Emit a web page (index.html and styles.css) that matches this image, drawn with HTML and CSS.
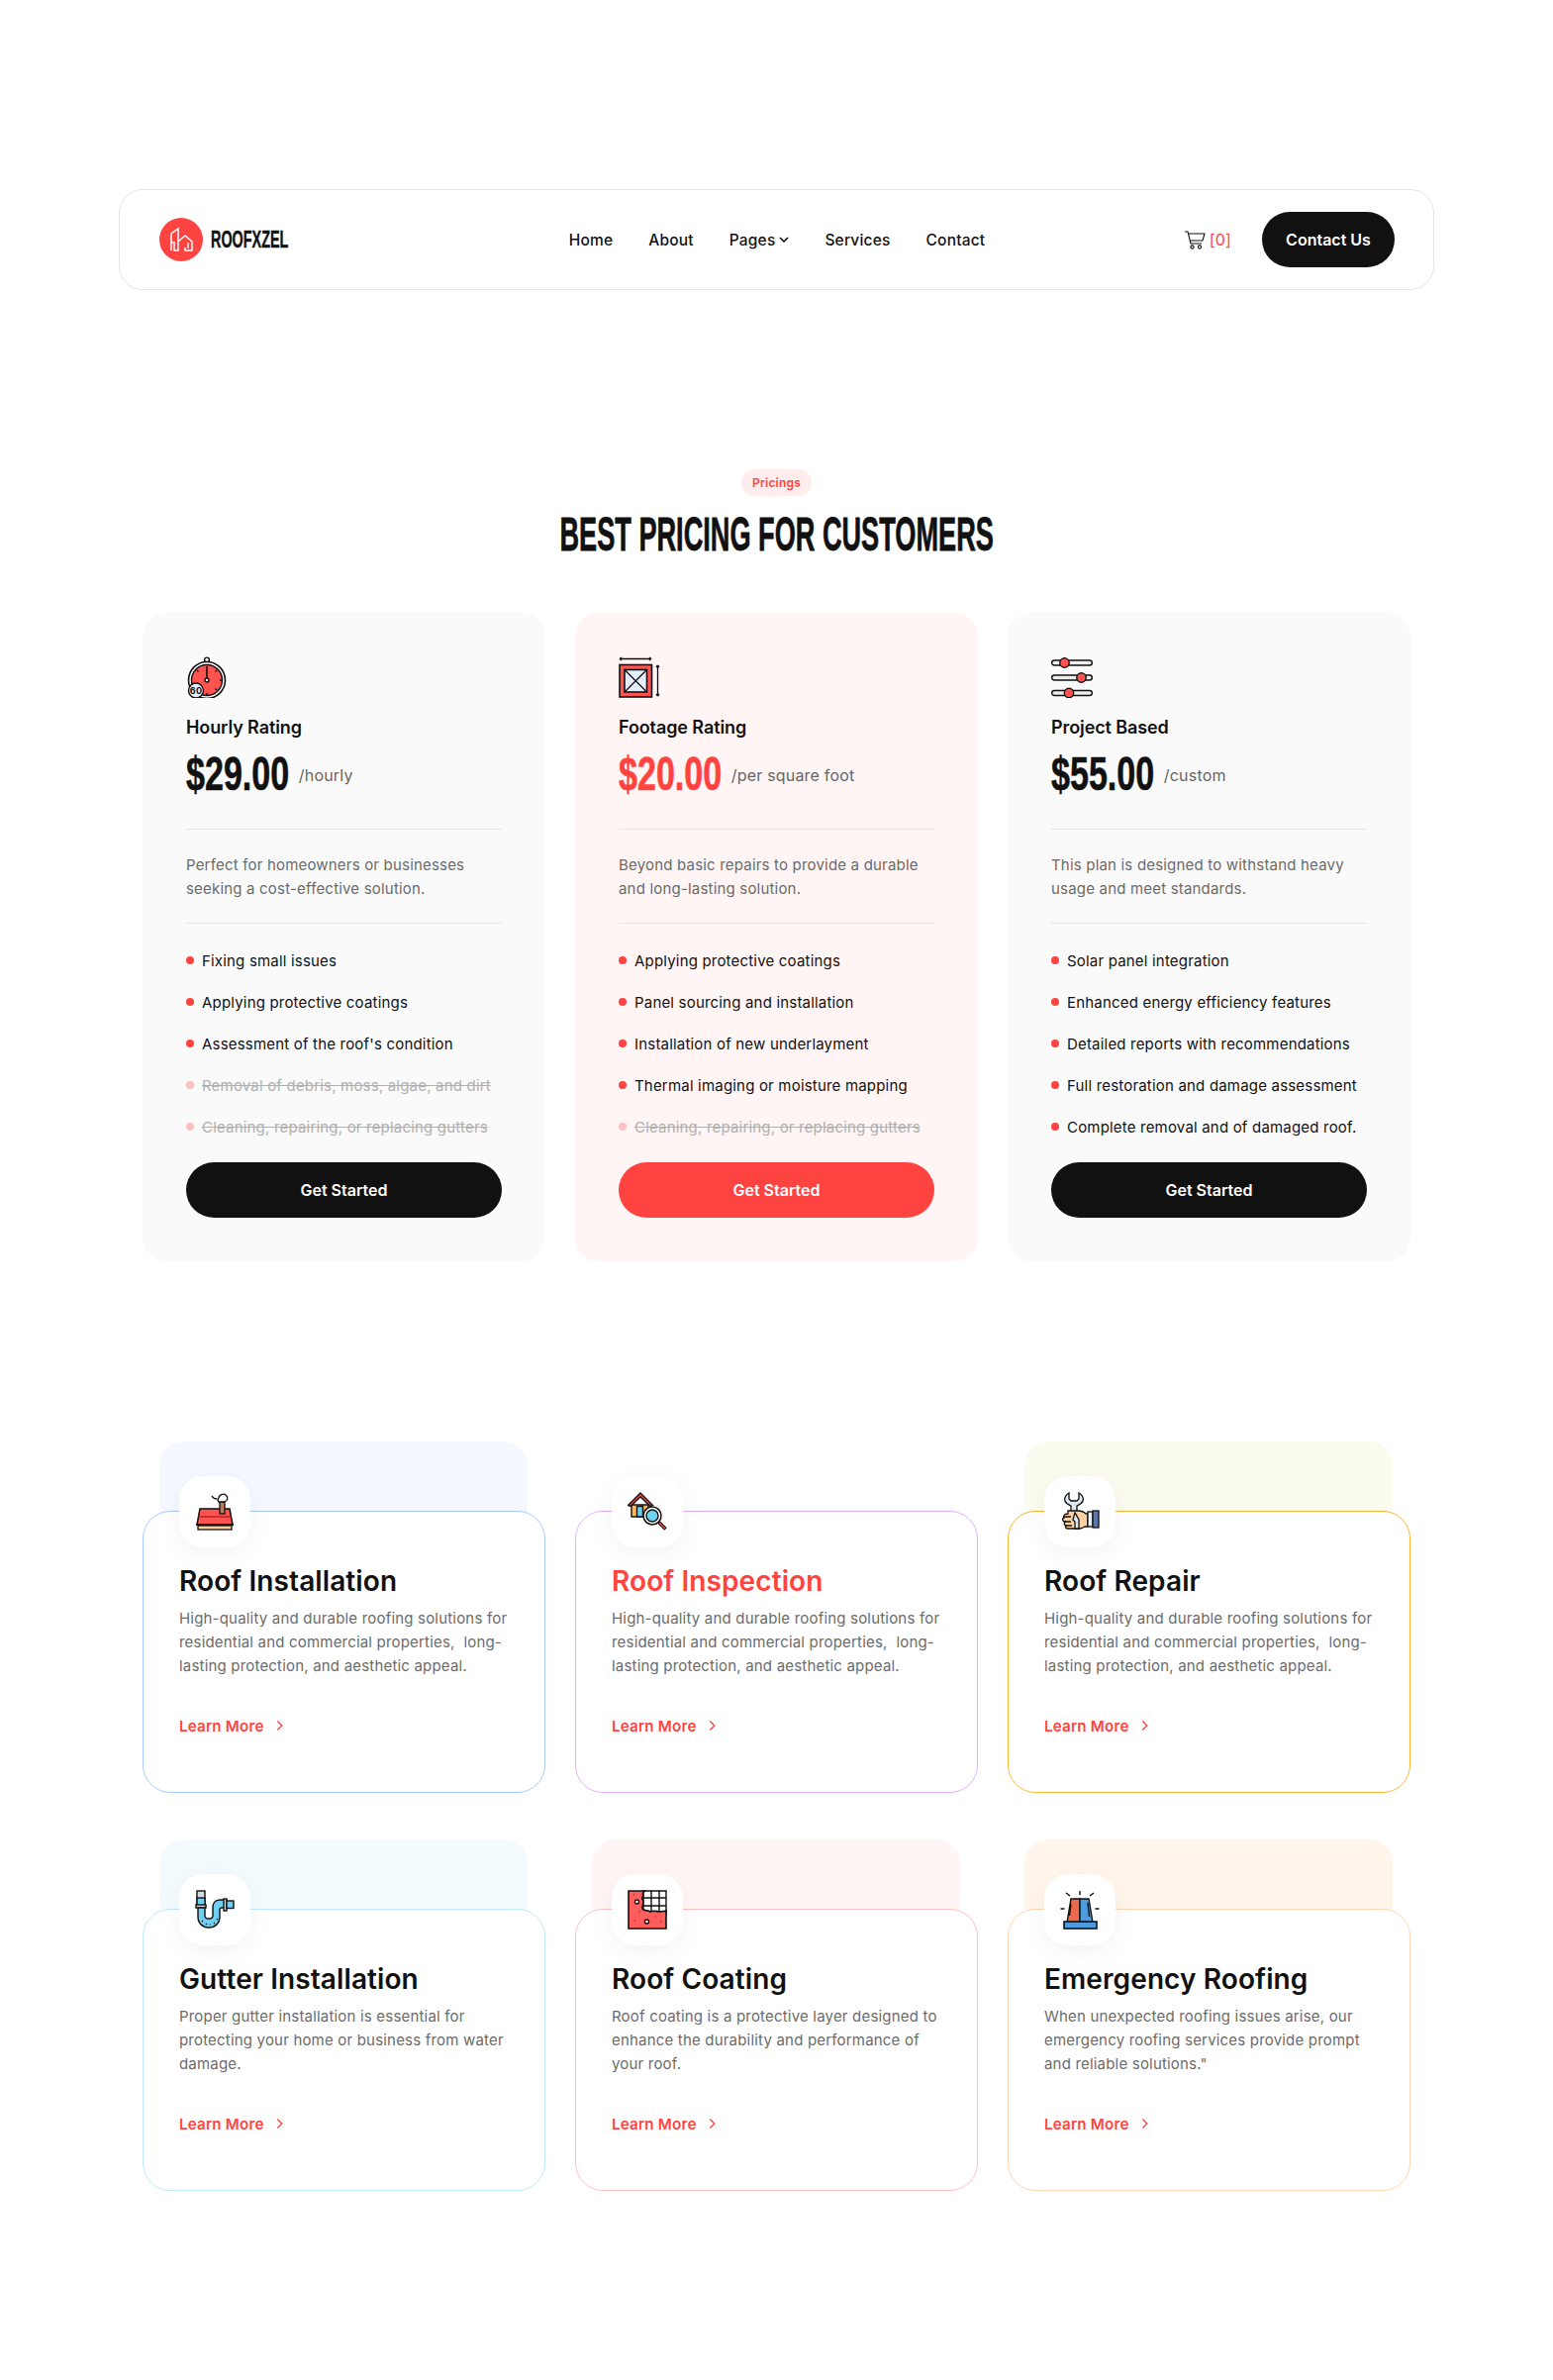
FILE: index.html
```html
<!DOCTYPE html>
<html lang="en">
<head>
<meta charset="utf-8">
<title>Roofxzel</title>
<link rel="stylesheet" href="styles.css">
</head>
<body>
<header class="site-header">
  <a class="brand">
    <span class="brand-mark">
      <svg viewBox="0 0 44 44" width="44" height="44" fill="none" stroke="#fff" stroke-width="1.5"><path d="M12 33V16l7-5v22h-4V25h-3"/><path d="M19 24l7-6 7 6v9h-7v-3"/><path d="M29 25v6"/></svg>
    </span>
    <span class="brand-name">ROOFXZEL</span>
  </a>
  <nav class="nav">
    <a>Home</a>
    <a>About</a>
    <a class="nav-drop">Pages <svg viewBox="0 0 10 6" width="10" height="6" fill="none" stroke="#111" stroke-width="1.600"><path d="M1 1l4 4 4-4"/></svg></a>
    <a>Services</a>
    <a>Contact</a>
  </nav>
  <div class="header-actions">
    <span class="cart">
      <svg viewBox="0 0 21 19" width="21" height="19" fill="none" stroke="#111" stroke-width="1.1"><path d="M0 1h3l3 12h11"/><path d="M3.4 3H20l-2 7H5.4"/><circle cx="7.5" cy="16.5" r="1.6"/><circle cx="15" cy="16.5" r="1.6"/></svg>
      <span class="cart-count">[0]</span>
    </span>
    <a class="contact-btn">Contact Us</a>
  </div>
</header>

<section class="pricing">
  <div class="section-head">
    <span class="pill">Pricings</span>
    <h2 class="section-title">BEST PRICING FOR CUSTOMERS</h2>
  </div>
  <div class="price-grid">
    <article class="price-card">
      <svg class="price-icon" viewBox="0 0 42 42" width="42" height="42" fill="none" stroke="#111" stroke-width="1.4"><circle cx="21" cy="3.500" r="2.400" fill="#fff"/><circle cx="21" cy="24" r="18.500" fill="#fafafa" stroke-width="1.600"/><circle cx="21" cy="24" r="15.500" fill="#ff5350"/><path d="M21 10v12" stroke-width="1.600"/><circle cx="21" cy="24" r="2" fill="#fff"/><path d="M31 14l-1.500 1.500M36 24h-2M31 34l-1.500-1.500M21 39v-2M11 14l1.500 1.500"/><circle cx="10" cy="34.500" r="7.500" fill="#e8eef8"/><text x="10" y="38" class="icon-text">60</text></svg>
      <h3 class="price-name">Hourly Rating</h3>
      <div class="price-row"><span class="price">$29.00</span><span class="per">/hourly</span></div>
      <p class="price-desc">Perfect for homeowners or businesses seeking a cost-effective solution.</p>
      <ul class="features">
        <li>Fixing small issues</li>
        <li>Applying protective coatings</li>
        <li>Assessment of the roof's condition</li>
        <li class="off">Removal of debris, moss, algae, and dirt</li>
        <li class="off">Cleaning, repairing, or replacing gutters</li>
      </ul>
      <a class="cta">Get Started</a>
    </article>
    <article class="price-card featured">
      <svg class="price-icon" viewBox="0 0 42 42" width="42" height="42" fill="none" stroke="#111" stroke-width="1.3"><rect x="1" y="8.500" width="32.500" height="32.500" fill="#ff5350" stroke-width="1.600"/><rect x="6" y="13.500" width="22.500" height="22.500" fill="#e5eefc" stroke-width="1.600"/><path d="M6 13.500l22.500 22.500M28.500 13.500L6 36"/><path d="M1 2.500h32M1 2.500l2-1.500M1 2.500l2 1.500M33 2.500l-2-1.500M33 2.500l-2 1.500M39.500 9v31M39.500 9l-1.500 2M39.500 9l1.500 2M39.500 40l-1.500-2M39.500 40l1.500-2"/></svg>
      <h3 class="price-name">Footage Rating</h3>
      <div class="price-row"><span class="price red">$20.00</span><span class="per">/per square foot</span></div>
      <p class="price-desc">Beyond basic repairs to provide a durable and long-lasting solution.</p>
      <ul class="features">
        <li>Applying protective coatings</li>
        <li>Panel sourcing and installation</li>
        <li>Installation of new underlayment</li>
        <li>Thermal imaging or moisture mapping</li>
        <li class="off">Cleaning, repairing, or replacing gutters</li>
      </ul>
      <a class="cta cta-red">Get Started</a>
    </article>
    <article class="price-card">
      <svg class="price-icon" viewBox="0 0 42 42" width="42" height="42" fill="none" stroke="#111" stroke-width="1.4"><rect x="0.700" y="4" width="40.600" height="5" rx="2.500" fill="#eee"/><rect x="0.700" y="19" width="40.600" height="5" rx="2.500" fill="#eee"/><rect x="0.700" y="34.500" width="40.600" height="5" rx="2.500" fill="#eee"/><circle cx="13.500" cy="6.500" r="4.700" fill="#ff5350"/><circle cx="30.500" cy="21.500" r="4.700" fill="#ff5350"/><circle cx="18" cy="37" r="4.700" fill="#ff5350"/></svg>
      <h3 class="price-name">Project Based</h3>
      <div class="price-row"><span class="price">$55.00</span><span class="per">/custom</span></div>
      <p class="price-desc">This plan is designed to withstand heavy usage and meet standards.</p>
      <ul class="features">
        <li>Solar panel integration</li>
        <li>Enhanced energy efficiency features</li>
        <li>Detailed reports with recommendations</li>
        <li>Full restoration and damage assessment</li>
        <li>Complete removal and of damaged roof.</li>
      </ul>
      <a class="cta">Get Started</a>
    </article>
  </div>
</section>

<section class="services">
  <article class="service s-blue">
    <div class="service-card">
      <span class="service-icon"><svg viewBox="0 0 40 40" width="40" height="40" fill="none" stroke="#111" stroke-width="1.300"><path d="M5 17h30l3 16H2z" fill="#ff5350" stroke-width="1.500"/><path d="M3.500 25h33" stroke="#b8202a"/><path d="M1 33h38" stroke-width="1.800"/><rect x="3" y="34" width="34" height="4" fill="#ffcf9e"/><rect x="25" y="10" width="5" height="12" fill="#c47a55"/><path d="M24 10c-2-2-1-3 0-4 0-3 5-5 7-3 3 2 2 6-1 7zM22 7c-2 0-4-1-5-3" fill="#fff"/></svg></span>
      <h3 class="service-title">Roof Installation</h3>
      <p class="service-desc">High-quality and durable roofing solutions for residential and commercial properties,&nbsp; long-lasting protection, and aesthetic appeal.</p>
      <a class="learn">Learn More <svg viewBox="0 0 9 13" width="8" height="12" fill="none" stroke="#ff4340" stroke-width="1.500"><path d="M1.500 1.500l5 5-5 5"/></svg></a>
    </div>
  </article>
  <article class="service s-purple">
    <div class="service-card">
      <span class="service-icon"><svg viewBox="0 0 40 40" width="40" height="40" fill="none" stroke="#111" stroke-width="1.400"><path d="M4 13v12h17V13z" fill="#ffb94d"/><path d="M0.500 13.500L13 1l12.500 12.500-2.500 1L13 5 3 14.500z" fill="#f04848"/><rect x="9.500" y="14.500" width="6" height="10.500" fill="#6ec9ee"/><circle cx="25" cy="24" r="9" fill="#fff" stroke-width="1.500"/><circle cx="25" cy="24" r="6" fill="#6fd0f2"/><path d="M31.500 30.500l7 7" stroke-width="3.600"/><path d="M32 31l6 6" stroke="#f04848" stroke-width="1.500"/></svg></span>
      <h3 class="service-title title-red">Roof Inspection</h3>
      <p class="service-desc">High-quality and durable roofing solutions for residential and commercial properties,&nbsp; long-lasting protection, and aesthetic appeal.</p>
      <a class="learn">Learn More <svg viewBox="0 0 9 13" width="8" height="12" fill="none" stroke="#ff4340" stroke-width="1.500"><path d="M1.500 1.500l5 5-5 5"/></svg></a>
    </div>
  </article>
  <article class="service s-amber">
    <div class="service-card">
      <span class="service-icon"><svg viewBox="0 0 40 40" width="40" height="40" fill="none" stroke="#111" stroke-width="1.300"><path d="M9 1c-3 2-5 5-4 8 1 3 4 4 6 5v6h6v-6c2-1 5-2 6-5 1-3-1-6-4-8v6l-2 2h-6l-2-2z" fill="#dfe9f2"/><path d="M8 19h10c4 0 6 1 8 3h2v13h-3c-2 1-3 2-5 2H8c-2 0-3-1-2-3-2 0-2-3-1-4-3 0-3-4-1-4-1-3 1-4 4-4z" fill="#fcd0a0"/><path d="M3 25h8M4 30h7M6 34h6"/><path d="M15 21l-2 7 2 2v7h4v-9z" fill="#dfe9f2"/><rect x="28" y="20" width="5" height="15" fill="#eef2f6"/><rect x="33" y="19" width="6" height="17" fill="#5a76ad"/></svg></span>
      <h3 class="service-title">Roof Repair</h3>
      <p class="service-desc">High-quality and durable roofing solutions for residential and commercial properties,&nbsp; long-lasting protection, and aesthetic appeal.</p>
      <a class="learn">Learn More <svg viewBox="0 0 9 13" width="8" height="12" fill="none" stroke="#ff4340" stroke-width="1.500"><path d="M1.500 1.500l5 5-5 5"/></svg></a>
    </div>
  </article>
  <article class="service s-cyan">
    <div class="service-card">
      <span class="service-icon"><svg viewBox="0 0 40 40" width="40" height="40" fill="none" stroke="#111" stroke-width="1.400"><rect x="2" y="1" width="8" height="15" fill="#d6dce2"/><rect x="2" y="8" width="8" height="8" fill="#6fd0f2"/><rect x="1" y="15" width="10" height="3" fill="#d6dce2"/><path d="M3 18v9c0 7 5 11 11 11s11-4 11-11v-7c0-1 1-2 2-2h5v-8h-7c-5 0-7 4-7 8v8c0 2-2 3-4 3s-4-1-4-3v-8z" fill="#6fd0f2"/><rect x="29" y="9" width="3" height="12" fill="#d6dce2"/><rect x="32" y="11" width="7" height="7.500" fill="#6fd0f2"/><path d="M7 31l1 1M11 34l1 1M15 35l1 0M19 34l1-1M22 30l1-1" stroke-width="1.200"/></svg></span>
      <h3 class="service-title">Gutter Installation</h3>
      <p class="service-desc">Proper gutter installation is essential for protecting your home or business from water damage.</p>
      <a class="learn">Learn More <svg viewBox="0 0 9 13" width="8" height="12" fill="none" stroke="#ff4340" stroke-width="1.500"><path d="M1.500 1.500l5 5-5 5"/></svg></a>
    </div>
  </article>
  <article class="service s-pink">
    <div class="service-card">
      <span class="service-icon"><svg viewBox="0 0 40 40" width="40" height="40" fill="none" stroke="#111" stroke-width="1.400"><path d="M16 1h23v23H16zM24 1v23M32 1v23M16 8h23M16 16h23"/><path d="M1 1h16c-2 3-2 3-1 5-2 2-1 4 0 5 0 3-1 5-1 8 2 3 6 1 8 3 4-2 7 0 9 0 3-1 5 0 7-1v18H1z" fill="#ff5c5c" stroke-width="1.600"/><circle cx="9.500" cy="12" r="2" fill="#fff"/><circle cx="19.500" cy="32" r="2" fill="#fff"/><path d="M6 5h.5M12 22h.5M7 31h.5M28 27h.5M33 32h.5" stroke-width="1.500"/></svg></span>
      <h3 class="service-title">Roof Coating</h3>
      <p class="service-desc">Roof coating is a protective layer designed to enhance the durability and performance of your roof.</p>
      <a class="learn">Learn More <svg viewBox="0 0 9 13" width="8" height="12" fill="none" stroke="#ff4340" stroke-width="1.500"><path d="M1.500 1.500l5 5-5 5"/></svg></a>
    </div>
  </article>
  <article class="service s-peach">
    <div class="service-card">
      <span class="service-icon"><svg viewBox="0 0 40 40" width="40" height="40" fill="none" stroke="#111" stroke-width="1.400"><path d="M11 9h9v24H7z" fill="#ec6a50"/><path d="M20 9h9l4 24H20z" fill="#4d9adf"/><rect x="4" y="32" width="33" height="7" fill="#4d9adf" stroke-width="1.600"/><path d="M20 1v4M6 3l4 3M34 3l-4 3M0.500 19h4M35.500 19h4M11 14l-1.500 12M28 13l1.500 14"/></svg></span>
      <h3 class="service-title">Emergency Roofing</h3>
      <p class="service-desc">When unexpected roofing issues arise, our emergency roofing services provide prompt and reliable solutions."</p>
      <a class="learn">Learn More <svg viewBox="0 0 9 13" width="8" height="12" fill="none" stroke="#ff4340" stroke-width="1.500"><path d="M1.500 1.500l5 5-5 5"/></svg></a>
    </div>
  </article>
</section>
</body>
</html>
```

FILE: styles.css
```css
* { box-sizing: border-box; }
html, body { margin: 0; padding: 0; }
body {
  background: #fff;
  color: #111;
  font-family: Inter, "Noto Sans", sans-serif;
  font-size: 15px;
  letter-spacing: 0.19px;
  min-height: 2404px;
}
h2, h3, p, ul { margin: 0; padding: 0; }
svg { display: block; }

.site-header {
  margin: 191px 120px 0;
  height: 102px;
  border: 1.5px solid #e6e6e6;
  border-radius: 24px;
  padding: 0 39px 0 40px;
  display: grid;
  grid-template-columns: 1fr auto 1fr;
  align-items: center;
}
.brand { display: flex; align-items: center; gap: 8px; }
.brand-mark { width: 44px; height: 44px; border-radius: 50%; background: #ff4340; }
.brand-name {
  display: inline-block;
  font-family: "Liberation Sans", sans-serif;
  font-weight: 700;
  font-size: 24px;
  letter-spacing: 0;
  color: #111;
  transform: scaleX(0.6);
  transform-origin: left center;
  -webkit-text-stroke: 0.4px #111;
}
.nav { display: flex; gap: 36px; font-size: 15.5px; font-weight: 450; }
.nav-drop { display: flex; align-items: center; gap: 4px; }
.header-actions { display: flex; justify-content: flex-end; align-items: center; gap: 31px; }
.cart { display: flex; align-items: center; gap: 4px; }
.cart-count { color: #ff4340; font-size: 16px; }
.contact-btn {
  height: 56px;
  width: 134px;
  border-radius: 28px;
  background: #111;
  color: #fff;
  font-weight: 600;
  font-size: 16px;
  letter-spacing: 0;
  display: flex;
  align-items: center;
  justify-content: center;
}

.pricing { margin-top: 181px; }
.section-head { display: flex; flex-direction: column; align-items: center; }
.pill {
  height: 27px;
  padding: 0 11px;
  border-radius: 14px;
  background: #ffeded;
  color: #ff4340;
  font-size: 12px;
  font-weight: 600;
  display: flex;
  align-items: center;
}
.section-title {
  margin-top: 13px;
  font-family: "Liberation Sans", sans-serif;
  font-weight: 700;
  font-size: 49px;
  line-height: 50px;
  letter-spacing: 0;
  color: #111;
  transform: scaleX(0.554);
  white-space: nowrap;
  -webkit-text-stroke: 0.8px #111;
}
.price-grid {
  margin: 55px 144px 0;
  display: grid;
  grid-template-columns: repeat(3, 1fr);
  gap: 30px;
}
.price-card {
  background: #fafafa;
  border-radius: 24px;
  padding: 44px;
  display: flex;
  flex-direction: column;
}
.price-card.featured { background: #fff5f4; }
.price-icon { display: block; }
.icon-text { font: 700 9px Inter, sans-serif; fill: #111; stroke: none; text-anchor: middle; }
.price-name { margin-top: 18px; font-size: 18px; line-height: 24px; font-weight: 600; letter-spacing: -0.1px; }
.price-row { margin-top: 8px; display: flex; align-items: center; gap: 10px; height: 50px; padding-bottom: 32px; box-sizing: content-box; border-bottom: 1.5px solid #e6e6e6; }
.price {
  display: inline-block;
  font-family: "Liberation Sans", sans-serif;
  font-weight: 700;
  font-size: 48px;
  line-height: 50px;
  letter-spacing: 0;
  margin-top: 4px;
  transform: scaleX(0.71);
  transform-origin: left center;
  margin-right: -43px;
  -webkit-text-stroke: 0.6px currentColor;
}
.price.red { color: #ff4340; }
.per { color: #666; font-size: 16px; margin-top: 6px; }
.price-desc {
  margin-top: 24px;
  padding-bottom: 22px;
  border-bottom: 1.5px solid #e6e6e6;
  color: #6b6b6b;
  font-size: 15px;
  line-height: 24px;
}
.features { margin-top: 16px; list-style: none; }
.features li {
  position: relative;
  height: 42px;
  padding-left: 16px;
  display: flex;
  align-items: center;
  font-size: 15px;
  color: #111;
  white-space: nowrap;
}
.features li::before {
  content: "";
  position: absolute;
  left: 0;
  top: 17px;
  width: 8px;
  height: 8px;
  border-radius: 50%;
  background: #ff4340;
}
.features li.off { color: #b0b0b0; text-decoration: line-through; }
.features li.off::before { background: #ffc0bf; }
.cta {
  margin-top: 15px;
  height: 56px;
  border-radius: 28px;
  background: #111;
  color: #fff;
  font-weight: 600;
  font-size: 16px;
  letter-spacing: 0;
  display: flex;
  align-items: center;
  justify-content: center;
}
.cta-red { background: #ff4340; }

.services {
  margin: 182px 144px 0;
  display: grid;
  grid-template-columns: repeat(3, 1fr);
  column-gap: 30px;
  row-gap: 47px;
}
.service { position: relative; padding-top: 70px; }
.service::before {
  content: "";
  position: absolute;
  top: 0;
  left: 17px;
  right: 18px;
  height: 100px;
  border-radius: 24px;
  background: var(--panel);
}
.service-card {
  position: relative;
  height: 285px;
  padding: 0 36px;
  background: #fff;
  border: 1px solid var(--line);
  border-radius: 28px;
  display: flex;
  flex-direction: column;
  align-items: flex-start;
}
.s-blue { --panel: #f5f8fe; --line: #a9c9ff; }
.s-purple { --panel: #fff; --line: #e2aeff; }
.s-amber { --panel: #fbfbef; --line: #ffb630; }
.s-cyan { --panel: #f3fbff; --line: #bde9fa; }
.s-pink { --panel: #fff5f4; --line: #ffc0c0; }
.s-peach { --panel: #fff5ea; --line: #ffd6b2; }
.service-icon {
  display: flex;
  align-items: center;
  justify-content: center;
  width: 72px;
  height: 72px;
  margin-top: -36px;
  border-radius: 24px;
  background: #fff;
  box-shadow: 0 6px 24px rgba(0, 0, 0, 0.05);
}
.service-title { margin-top: 15.500px; font-size: 28px; line-height: 36px; font-weight: 600; letter-spacing: 0.1px; }
.title-red { color: #ff4340; }
.service-desc { margin-top: 8px; color: #6b6b6b; font-size: 15px; line-height: 24px; }
.learn {
  margin-top: 39px;
  display: flex;
  align-items: center;
  gap: 12px;
  color: #ff4340;
  font-size: 15.2px;
  font-weight: 600;
}
```
